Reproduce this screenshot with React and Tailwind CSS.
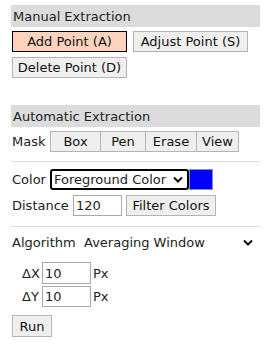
import React, { useState } from 'react';

const font = { fontFamily: '"DejaVu Sans", Verdana, sans-serif' };

const grayBtn =
  'h-[21px] border border-[#b4b4b4] bg-[#efefef] text-[13px] text-[#111] flex items-center justify-center leading-none';
const activeBtn =
  'h-[21px] border border-black bg-[#fdd3bd] text-[13px] text-[#111] flex items-center justify-center leading-none';

const SectionBar = ({ children }) => (
  <div className="h-[22px] bg-[#dcdcdc] flex items-center pl-[2px] text-[13px] text-[#222] leading-none">
    {children}
  </div>
);

const Chevron = () => (
  <svg width="10" height="7" viewBox="0 0 10 7">
    <path d="M1 1.5 L5 5.5 L9 1.5" fill="none" stroke="#111" strokeWidth="2" />
  </svg>
);

const App = () => {
  const [tool, setTool] = useState('add');
  const [distance, setDistance] = useState('120');
  const [dx, setDx] = useState('10');
  const [dy, setDy] = useState('10');

  return (
    <div className="w-[278px] h-[348px] bg-white text-[13px] text-[#222] leading-none" style={font}>
      <div className="ml-[11px] w-[249px] pt-[5px]">
        <SectionBar>Manual Extraction</SectionBar>

        <div className="flex flex-col gap-[5px] mt-[4px] ml-[1px]">
          <div className="flex gap-[6px]">
            <button onClick={() => setTool('add')} className={`w-[115px] ${tool === 'add' ? activeBtn : grayBtn}`}>
              Add Point (A)
            </button>
            <button onClick={() => setTool('adjust')} className={`w-[115px] ${tool === 'adjust' ? activeBtn : grayBtn}`}>
              Adjust Point (S)
            </button>
          </div>
          <button onClick={() => setTool('delete')} className={`w-[115px] ${tool === 'delete' ? activeBtn : grayBtn}`}>
            Delete Point (D)
          </button>
        </div>

        <div className="mt-[27px]">
          <SectionBar>Automatic Extraction</SectionBar>
        </div>

        <div className="flex items-center h-[21px] mt-[4px] ml-[1px]">
          <span className="w-[38px]">Mask</span>
          <button className={`w-[51px] ${grayBtn}`}>Box</button>
          <button className={`w-[45px] ${grayBtn} border-l-0`}>Pen</button>
          <button className={`w-[51px] ${grayBtn} border-l-0`}>Erase</button>
          <button className={`w-[42px] ${grayBtn} border-l-0`}>View</button>
        </div>

        <div className="h-px bg-[#dddddd] mt-[9px]" />

        <div className="flex items-center h-[21px] mt-[7px] ml-[1px]">
          <span className="w-[38px]">Color</span>
          <div className="w-[139px] h-[21px] border-2 border-black rounded-[3px] flex items-center justify-between pl-[2px] pr-[4px]">
            <span>Foreground Color</span>
            <Chevron />
          </div>
          <div className="w-[24px] h-[21px] bg-[#0000ff] border border-[#7c8bd6]" />
        </div>

        <div className="flex items-center h-[21px] mt-[5px] ml-[1px]">
          <span className="w-[61px]">Distance</span>
          <input
            value={distance}
            onChange={(e) => setDistance(e.target.value)}
            className="w-[49px] h-[21px] border border-[#a9a9a9] px-[2px] text-[13px] outline-none"
            style={font}
          />
          <button className={`w-[90px] ml-[4px] ${grayBtn}`}>Filter Colors</button>
        </div>

        <div className="h-px bg-[#dddddd] mt-[10px]" />

        <div className="flex items-center h-[20px] mt-[5px] ml-[1px]">
          <span className="w-[72px]">Algorithm</span>
          <div className="flex-1 flex items-center justify-between pr-[7px]">
            <span>Averaging Window</span>
            <Chevron />
          </div>
        </div>

        <div className="flex flex-col gap-[2px] mt-[10px] ml-[11px]">
          <div className="flex items-center h-[22px]">
            <span className="w-[20px]">ΔX</span>
            <input
              value={dx}
              onChange={(e) => setDx(e.target.value)}
              className="w-[49px] h-[22px] border border-[#a9a9a9] px-[2px] text-[13px] outline-none"
              style={font}
            />
            <span className="ml-[2px]">Px</span>
          </div>
          <div className="flex items-center h-[21px]">
            <span className="w-[20px]">ΔY</span>
            <input
              value={dy}
              onChange={(e) => setDy(e.target.value)}
              className="w-[49px] h-[21px] border border-[#a9a9a9] px-[2px] text-[13px] outline-none"
              style={font}
            />
            <span className="ml-[2px]">Px</span>
          </div>
        </div>

        <button className={`w-[40px] h-[22px] mt-[8px] ml-[1px] ${grayBtn}`}>Run</button>
      </div>
    </div>
  );
};

export default App;
